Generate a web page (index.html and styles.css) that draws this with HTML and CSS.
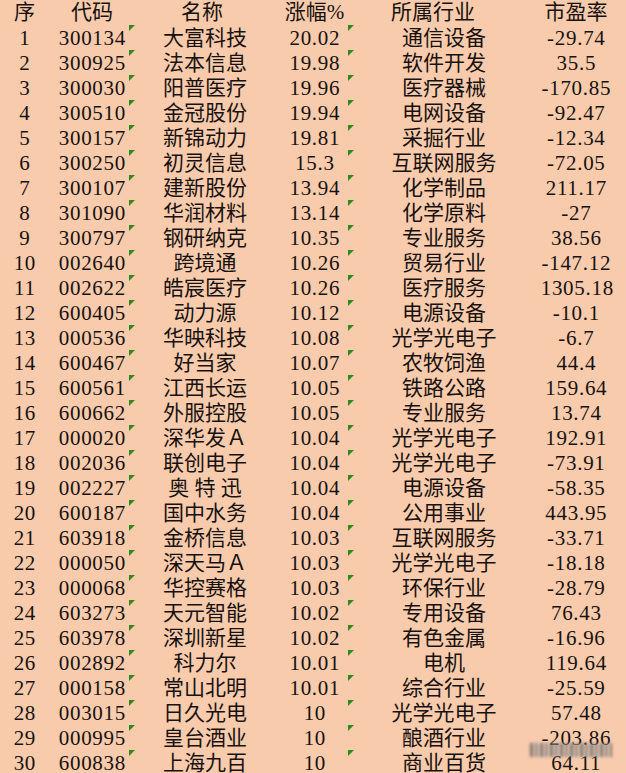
FILE: index.html
```html
<!DOCTYPE html>
<html lang="zh-CN">
<head>
<meta charset="utf-8">
<title>涨幅榜</title>
<link rel="stylesheet" href="styles.css">
</head>
<body>
<div class="sheet">
  <div class="row head">
    <div class="c">序</div><div class="c">代码</div><div class="c name-h">名称</div><div class="c">涨幅%</div><div class="c ind-h">所属行业</div><div class="c">市盈率</div>
  </div>
  <div class="row"><div class="c">1</div><div class="c t">300134</div><div class="c">大富科技</div><div class="c t">20.02</div><div class="c ind">通信设备</div><div class="c">-29.74</div></div>
  <div class="row"><div class="c">2</div><div class="c t">300925</div><div class="c">法本信息</div><div class="c t">19.98</div><div class="c ind">软件开发</div><div class="c">35.5</div></div>
  <div class="row"><div class="c">3</div><div class="c t">300030</div><div class="c">阳普医疗</div><div class="c t">19.96</div><div class="c ind">医疗器械</div><div class="c">-170.85</div></div>
  <div class="row"><div class="c">4</div><div class="c t">300510</div><div class="c">金冠股份</div><div class="c t">19.94</div><div class="c ind">电网设备</div><div class="c">-92.47</div></div>
  <div class="row"><div class="c">5</div><div class="c t">300157</div><div class="c">新锦动力</div><div class="c t">19.81</div><div class="c ind">采掘行业</div><div class="c">-12.34</div></div>
  <div class="row"><div class="c">6</div><div class="c t">300250</div><div class="c">初灵信息</div><div class="c t">15.3</div><div class="c ind">互联网服务</div><div class="c">-72.05</div></div>
  <div class="row"><div class="c">7</div><div class="c t">300107</div><div class="c">建新股份</div><div class="c t">13.94</div><div class="c ind">化学制品</div><div class="c">211.17</div></div>
  <div class="row"><div class="c">8</div><div class="c t">301090</div><div class="c">华润材料</div><div class="c t">13.14</div><div class="c ind">化学原料</div><div class="c">-27</div></div>
  <div class="row"><div class="c">9</div><div class="c t">300797</div><div class="c">钢研纳克</div><div class="c t">10.35</div><div class="c ind">专业服务</div><div class="c">38.56</div></div>
  <div class="row"><div class="c">10</div><div class="c t">002640</div><div class="c">跨境通</div><div class="c t">10.26</div><div class="c ind">贸易行业</div><div class="c">-147.12</div></div>
  <div class="row"><div class="c">11</div><div class="c t">002622</div><div class="c">皓宸医疗</div><div class="c t">10.26</div><div class="c ind">医疗服务</div><div class="c">1305.18</div></div>
  <div class="row"><div class="c">12</div><div class="c t">600405</div><div class="c">动力源</div><div class="c t">10.12</div><div class="c ind">电源设备</div><div class="c">-10.1</div></div>
  <div class="row"><div class="c">13</div><div class="c t">000536</div><div class="c">华映科技</div><div class="c t">10.08</div><div class="c ind">光学光电子</div><div class="c">-6.7</div></div>
  <div class="row"><div class="c">14</div><div class="c t">600467</div><div class="c">好当家</div><div class="c t">10.07</div><div class="c ind">农牧饲渔</div><div class="c">44.4</div></div>
  <div class="row"><div class="c">15</div><div class="c t">600561</div><div class="c">江西长运</div><div class="c t">10.05</div><div class="c ind">铁路公路</div><div class="c">159.64</div></div>
  <div class="row"><div class="c">16</div><div class="c t">600662</div><div class="c">外服控股</div><div class="c t">10.05</div><div class="c ind">专业服务</div><div class="c">13.74</div></div>
  <div class="row"><div class="c">17</div><div class="c t">000020</div><div class="c">深华发Ａ</div><div class="c t">10.04</div><div class="c ind">光学光电子</div><div class="c">192.91</div></div>
  <div class="row"><div class="c">18</div><div class="c t">002036</div><div class="c">联创电子</div><div class="c t">10.04</div><div class="c ind">光学光电子</div><div class="c">-73.91</div></div>
  <div class="row"><div class="c">19</div><div class="c t">002227</div><div class="c">奥 特 迅</div><div class="c t">10.04</div><div class="c ind">电源设备</div><div class="c">-58.35</div></div>
  <div class="row"><div class="c">20</div><div class="c t">600187</div><div class="c">国中水务</div><div class="c t">10.04</div><div class="c ind">公用事业</div><div class="c">443.95</div></div>
  <div class="row"><div class="c">21</div><div class="c t">603918</div><div class="c">金桥信息</div><div class="c t">10.03</div><div class="c ind">互联网服务</div><div class="c">-33.71</div></div>
  <div class="row"><div class="c">22</div><div class="c t">000050</div><div class="c">深天马Ａ</div><div class="c t">10.03</div><div class="c ind">光学光电子</div><div class="c">-18.18</div></div>
  <div class="row"><div class="c">23</div><div class="c t">000068</div><div class="c">华控赛格</div><div class="c t">10.03</div><div class="c ind">环保行业</div><div class="c">-28.79</div></div>
  <div class="row"><div class="c">24</div><div class="c t">603273</div><div class="c">天元智能</div><div class="c t">10.02</div><div class="c ind">专用设备</div><div class="c">76.43</div></div>
  <div class="row"><div class="c">25</div><div class="c t">603978</div><div class="c">深圳新星</div><div class="c t">10.02</div><div class="c ind">有色金属</div><div class="c">-16.96</div></div>
  <div class="row"><div class="c">26</div><div class="c t">002892</div><div class="c">科力尔</div><div class="c t">10.01</div><div class="c ind">电机</div><div class="c">119.64</div></div>
  <div class="row"><div class="c">27</div><div class="c t">000158</div><div class="c">常山北明</div><div class="c t">10.01</div><div class="c ind">综合行业</div><div class="c">-25.59</div></div>
  <div class="row"><div class="c">28</div><div class="c t">003015</div><div class="c">日久光电</div><div class="c t">10</div><div class="c ind">光学光电子</div><div class="c">57.48</div></div>
  <div class="row"><div class="c">29</div><div class="c t">000995</div><div class="c">皇台酒业</div><div class="c t">10</div><div class="c ind">酿酒行业</div><div class="c">-203.86</div></div>
  <div class="row"><div class="c">30</div><div class="c t">600838</div><div class="c">上海九百</div><div class="c t">10</div><div class="c ind">商业百货</div><div class="c">64.11</div></div>
  <div class="mark" aria-hidden="true"></div>
</div>
</body>
</html>
```
FILE: styles.css
```css
html, body {
  margin: 0;
  padding: 0;
  background: #f8cbad;
}
.sheet {
  position: relative;
  width: 626px;
  height: 773px;
  overflow: hidden;
  background: #f8cbad;
  color: #17120f;
  font-family: "Liberation Serif", "Noto Sans CJK SC", serif;
  font-size: 21px;
}
.row {
  display: grid;
  grid-template-columns: 49px 86px 140px 79px 186px 72px;
  height: 25px;
  line-height: 25px;
}
.c {
  position: relative;
  text-align: center;
  white-space: pre;
  padding-top: 1px;
}
.row:not(.head) .c:nth-child(1),
.row:not(.head) .c:nth-child(2),
.row:not(.head) .c:nth-child(4),
.row:not(.head) .c:nth-child(6) {
  letter-spacing: 0.7px;
  padding-left: 0.7px;
}
.head .c {
  padding-top: 0;
}
.name-h {
  padding-right: 6px;
}
.ind-h {
  padding-right: 28px;
}
.ind {
  padding-right: 6px;
}
.t::after {
  content: "";
  position: absolute;
  top: 0;
  right: 0;
  width: 0;
  height: 0;
  border-top: 6px solid #2f8a1c;
  border-right: 6px solid transparent;
}
.mark {
  position: absolute;
  left: 530px;
  top: 743px;
  width: 82px;
  height: 14px;
  background:
    repeating-linear-gradient(90deg, rgba(90,85,82,0.75) 0 3px, rgba(205,200,196,0.6) 3px 5px, rgba(120,112,108,0.7) 5px 8px, rgba(225,220,216,0.5) 8px 10px);
  filter: blur(1.5px);
}
```
